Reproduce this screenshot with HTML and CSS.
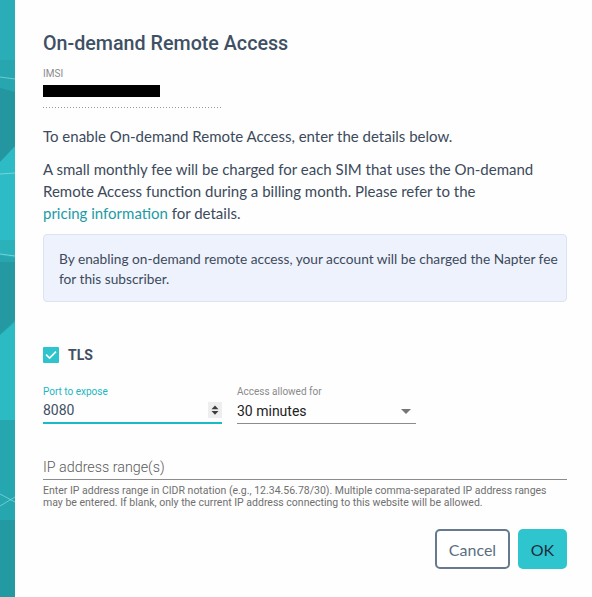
FILE: index.html
```html
<!DOCTYPE html>
<html lang="en">
<head>
<meta charset="utf-8">
<title>On-demand Remote Access</title>
<link rel="stylesheet" href="styles.css">
</head>
<body>
<div class="page">
  <div class="backdrop">
    <svg class="backdrop-art" viewBox="0 0 15 597" preserveAspectRatio="none" xmlns="http://www.w3.org/2000/svg">
      <rect x="0" y="0" width="15" height="597" fill="#27a6af"/>
      <rect x="0" y="0" width="15" height="60" fill="#2aadb6"/>
      <polygon points="0,88 15,92 15,150 0,162" fill="#23969f"/>
      <polygon points="0,162 15,146 15,240 0,240" fill="#2dbcc5"/>
      <polygon points="0,240 15,240 15,258 0,255" fill="#2ab1ba"/>
      <polygon points="0,262 15,262 15,320 0,335" fill="#2599a2"/>
      <polygon points="0,335 15,322 15,420 0,420" fill="#2cbac3"/>
      <polygon points="0,420 15,420 15,597 0,597" fill="#26a7b0"/>
      <polygon points="0,520 15,520 15,597 0,597" fill="#2399a2"/>
      <line x1="0" y1="77" x2="15" y2="79" stroke="#7fd6dc" stroke-width="0.8"/>
      <line x1="0" y1="174" x2="15" y2="173" stroke="#86dbe0" stroke-width="0.8"/>
      <line x1="0" y1="254" x2="15" y2="256" stroke="#86dbe0" stroke-width="0.8"/>
      <line x1="0" y1="494" x2="15" y2="502" stroke="#86dbe0" stroke-width="0.7"/>
      <line x1="0" y1="506" x2="15" y2="497" stroke="#86dbe0" stroke-width="0.7"/>
    </svg>
  </div>

  <div class="modal">
    <h1 class="title">On-demand Remote Access</h1>

    <div class="imsi">
      <div class="imsi-label">IMSI</div>
      <div class="imsi-value"><span class="redact"></span></div>
    </div>

    <p class="text intro">To enable On-demand Remote Access, enter the details below.</p>
    <p class="text fee">A small monthly fee will be charged for each SIM that uses the On-demand Remote Access function during a billing month. Please refer to the <a class="link" href="#">pricing information</a> for details.</p>

    <div class="notice">By enabling on-demand remote access, your account will be charged the Napter fee for this subscriber.</div>

    <label class="check">
      <span class="check-box">
        <svg viewBox="0 0 16 16" width="16" height="16" xmlns="http://www.w3.org/2000/svg"><path d="M3.6 8.2 L6.6 11.1 L12.4 5.2" fill="none" stroke="#ffffff" stroke-width="1.6" stroke-linecap="square"/></svg>
      </span>
      <span class="check-label">TLS</span>
    </label>

    <div class="fields">
      <div class="field">
        <div class="field-label field-label-active">Port to expose</div>
        <div class="field-input field-input-active">
          <span class="field-value">8080</span>
          <span class="spinner">
            <svg viewBox="0 0 14 16" width="14" height="16" xmlns="http://www.w3.org/2000/svg"><polygon points="7,3.5 10.5,7.2 3.5,7.2" fill="#3c3c3c"/><polygon points="3.5,9 10.5,9 7,12.7" fill="#3c3c3c"/></svg>
          </span>
        </div>
      </div>
      <div class="field">
        <div class="field-label">Access allowed for</div>
        <div class="field-input">
          <span class="field-value">30 minutes</span>
          <span class="caret">
            <svg viewBox="0 0 10 5" width="10" height="5" xmlns="http://www.w3.org/2000/svg"><polygon points="0,0 10,0 5,5" fill="#757575"/></svg>
          </span>
        </div>
      </div>
    </div>

    <div class="ip-field">
      <div class="ip-input"><span class="placeholder">IP address range(s)</span></div>
      <div class="helper">Enter IP address range in CIDR notation (e.g., 12.34.56.78/30). Multiple comma-separated IP address ranges may be entered. If blank, only the current IP address connecting to this website will be allowed.</div>
    </div>

    <div class="actions">
      <button class="btn btn-cancel" type="button">Cancel</button>
      <button class="btn btn-ok" type="button">OK</button>
    </div>
  </div>
</div>
</body>
</html>
```

FILE: styles.css
```css
html, body {
  margin: 0;
  padding: 0;
  background: #ffffff;
}

.page {
  display: flex;
  width: 592px;
  height: 597px;
  overflow: hidden;
}

.backdrop {
  width: 15px;
  flex: 0 0 15px;
  height: 597px;
}

.backdrop-art {
  display: block;
  width: 15px;
  height: 597px;
}

.modal {
  flex: 1;
  background: #fefefe;
  padding: 32px 25px 0 28px;
  font-family: "Lato", "Noto Sans", sans-serif;
  color: #3c4a5b;
}

.title {
  margin: 0;
  font-family: "Roboto", "Liberation Sans", sans-serif;
  font-weight: 500;
  font-size: 19.7px;
  line-height: 24px;
  color: #3f5064;
}

.imsi {
  margin-top: 12px;
}

.imsi-label {
  font-family: "Roboto", sans-serif;
  font-size: 10px;
  line-height: 12px;
  color: #8a8a8a;
}

.imsi-value {
  width: 178px;
  height: 28px;
  box-sizing: border-box;
  padding-top: 5px;
  background: linear-gradient(to right, #9a9a9a 1px, transparent 1px) 0 100% / 3px 1px repeat-x;
}

.redact {
  display: block;
  width: 117px;
  height: 12px;
  background: #000000;
}

.text {
  margin: 0;
  font-size: 15px;
  line-height: 22px;
}

.intro {
  margin-top: 17px;
}

.fee {
  margin-top: 11px;
}

.link {
  color: #1d9aa6;
  text-decoration: none;
  white-space: nowrap;
}

.notice {
  margin-top: 10px;
  background: #eef2fc;
  border: 1px solid #dbe2f2;
  border-radius: 4px;
  padding: 14px 6px 12px 15px;
  font-size: 13.7px;
  line-height: 20px;
}

.check {
  margin-top: 43px;
  height: 20px;
  display: flex;
  align-items: center;
  gap: 9px;
}

.check-box {
  width: 16px;
  height: 16px;
  background: #2ec4ce;
  border-radius: 1px;
  display: flex;
}

.check-label {
  font-family: "Roboto", sans-serif;
  font-weight: 700;
  font-size: 14px;
  color: #3f5064;
}

.fields {
  margin-top: 21px;
  display: flex;
  gap: 15px;
}

.field {
  width: 179px;
  font-family: "Roboto", sans-serif;
}

.field-label {
  font-size: 10px;
  line-height: 12px;
  color: #8a8a8a;
}

.field-label-active {
  color: #1ab6c2;
}

.field-input {
  height: 26px;
  box-sizing: border-box;
  border-bottom: 1px solid #8c8c8c;
  display: flex;
  align-items: center;
  justify-content: space-between;
}

.field-input-active {
  border-bottom: 2px solid #19bcc6;
}

.field-value {
  font-size: 14px;
  color: #222222;
  line-height: 20px;
}

.field-input-active .field-value {
  color: #3f5064;
}

.spinner {
  display: flex;
  background: #eeeeee;
  width: 14px;
  height: 16px;
}

.caret {
  display: flex;
  margin-right: 5px;
  margin-top: 1px;
}

.ip-field {
  margin-top: 30px;
}

.ip-input {
  height: 26px;
  box-sizing: border-box;
  border-bottom: 1px solid #8c8c8c;
  display: flex;
  align-items: center;
}

.placeholder {
  font-family: "Roboto", sans-serif;
  font-weight: 300;
  font-size: 14.3px;
  color: #5b5b5b;
}

.helper {
  margin-top: 5px;
  font-family: "Roboto", sans-serif;
  font-size: 10.5px;
  line-height: 12px;
  color: #707070;
}

.actions {
  margin-top: 20px;
  display: flex;
  justify-content: flex-end;
  gap: 8px;
}

.btn {
  height: 40px;
  border-radius: 5px;
  font-family: "Lato", "Noto Sans", sans-serif;
  font-size: 16px;
  padding: 0;
  cursor: pointer;
}

.btn-cancel {
  width: 75px;
  background: #ffffff;
  border: 2px solid #657a8e;
  color: #5a6e82;
}

.btn-ok {
  width: 49px;
  background: #2ec5cf;
  border: none;
  color: #1f2d3d;
}
```
